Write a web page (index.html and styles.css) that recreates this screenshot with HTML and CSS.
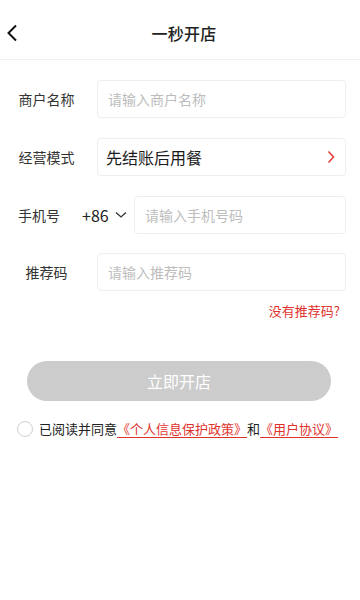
FILE: index.html
```html
<!DOCTYPE html>
<html lang="zh">
<head>
<meta charset="utf-8">
<link rel="stylesheet" href="styles.css">
</head>
<body>
<div class="page">
  <header class="header">
    <svg class="back" width="12" height="18" viewBox="0 0 12 18"><path d="M10 1.5 L2.5 9 L10 16.5" fill="none" stroke="#111" stroke-width="2"/></svg>
    <div class="title">一秒开店</div>
  </header>
  <main class="form">
    <div class="row">
      <div class="label">商户名称</div>
      <div class="field"><span class="ph">请输入商户名称</span></div>
    </div>
    <div class="row">
      <div class="label">经营模式</div>
      <div class="field select"><span class="value">先结账后用餐</span>
        <svg class="arrow" width="8" height="14" viewBox="0 0 8 14"><path d="M1.5 1.5 L6.5 7 L1.5 12.5" fill="none" stroke="#e0322d" stroke-width="1.4"/></svg>
      </div>
    </div>
    <div class="row">
      <div class="label phone-label">手机号</div>
      <div class="code">+86
        <svg width="12" height="8" viewBox="0 0 12 8"><path d="M1 1.5 L6 6 L11 1.5" fill="none" stroke="#333" stroke-width="1.3"/></svg>
      </div>
      <div class="field"><span class="ph">请输入手机号码</span></div>
    </div>
    <div class="row">
      <div class="label">推荐码</div>
      <div class="field"><span class="ph">请输入推荐码</span></div>
    </div>
    <div class="noref">没有推荐码?</div>
    <div class="btn">立即开店</div>
    <div class="agree">
      <span class="radio"></span>
      <span>已阅读并同意<a class="link">《个人信息保护政策》</a>和<a class="link">《用户协议》</a></span>
    </div>
  </main>
</div>
</body>
</html>
```
FILE: styles.css
```css
* { box-sizing: border-box; }
html, body { margin: 0; padding: 0; background: #fff; }
body {
  font-family: "Noto Sans CJK SC", "Noto Sans", sans-serif;
  color: #222;
}
.page { width: 360px; height: 600px; overflow: hidden; }
.header {
  height: 60px;
  border-bottom: 1px solid #f0f0f0;
  display: flex;
  align-items: center;
  justify-content: center;
  position: relative;
  padding-top: 6px;
  padding-left: 8px;
}
.back { position: absolute; left: 6px; top: 24px; }
.title { font-size: 16px; font-weight: 500; color: #222; letter-spacing: 0.3px; }
.form { padding: 20px 14px 0 18px; }
.row {
  display: flex;
  align-items: center;
  height: 38px;
  margin-bottom: 20px;
}
.row:nth-child(3) { margin-bottom: 19px; }
.label {
  width: 79px;
  flex: none;
  font-size: 14px;
  color: #333;
  padding-right: 22px;
  text-align: center;
}
.phone-label { width: 64px; text-align: left; padding-right: 0; }
.code {
  flex: none;
  width: 52px;
  font-size: 16px;
  color: #222;
  display: flex;
  align-items: center;
  gap: 6px;
}
.field {
  flex: 1;
  height: 38px;
  border: 1px solid #eeeeee;
  border-radius: 4px;
  display: flex;
  align-items: center;
  padding-left: 10px;
  padding-right: 10px;
}
.ph { font-size: 14px; color: #bdbdbd; }
.select { justify-content: space-between; padding-left: 8px; }
.value { font-size: 16px; color: #1a1a1a; }
.noref {
  margin-top: -10px;
  text-align: right;
  font-size: 13px;
  color: #e0322d;
  padding-right: 6px;
  line-height: 20px;
}
.btn {
  margin: 40px 15px 0 9px;
  height: 40px;
  border-radius: 20px;
  background: #cccccc;
  color: #fff;
  font-size: 16px;
  display: flex;
  align-items: center;
  justify-content: center;
}
.agree {
  margin-top: 18px;
  margin-left: -1px;
  display: flex;
  align-items: center;
  font-size: 13px;
  color: #222;
  white-space: nowrap;
}
.radio {
  width: 16px; height: 16px;
  border: 1px solid #d0d0d0;
  border-radius: 50%;
  margin-right: 6px;
  flex: none;
}
.link { color: #e0322d; text-decoration: underline; text-underline-offset: 3px; }
```
